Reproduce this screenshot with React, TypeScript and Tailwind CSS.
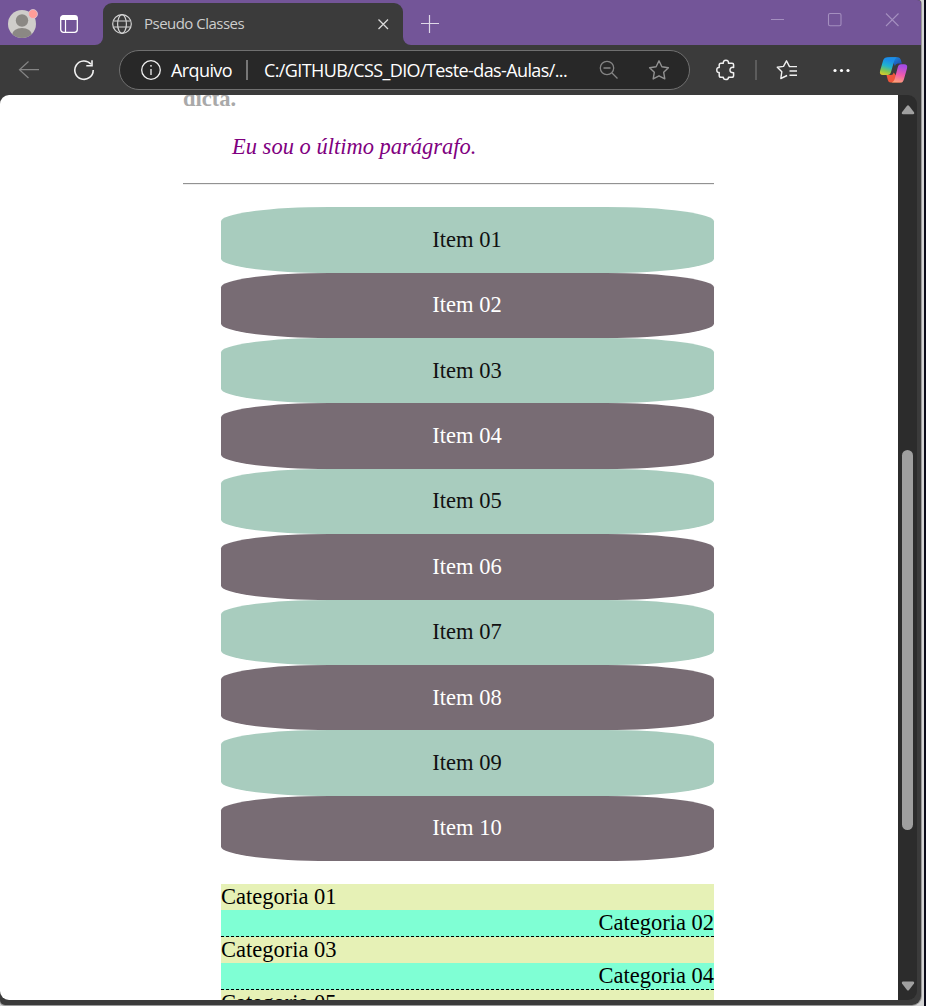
const items = ['01', '02', '03', '04', '05', '06', '07', '08', '09', '10'];
const categories = ['01', '02', '03', '04', '05'];

function TitleBar() {
  return (
    <header className="flex h-[45px] shrink-0 items-start bg-[#735598]">
      <div className="flex h-[45px] w-[103px] shrink-0 items-center bg-[#3b3b3b]">
        <div className="flex h-[45px] w-full items-center rounded-br-[8px] bg-[#735598] pt-[3px] pl-[7px]">
          <svg width="31" height="30" viewBox="0 0 31 30">
            <defs>
              <clipPath id="avatar">
                <circle cx="15" cy="15" r="14" />
              </clipPath>
            </defs>
            <circle cx="15" cy="15" r="14" fill="#cfcdca" />
            <g clipPath="url(#avatar)" fill="#8b8884">
              <circle cx="15" cy="11.5" r="6.2" />
              <ellipse cx="15" cy="26" rx="10" ry="7" />
            </g>
            <circle cx="26" cy="5" r="4.5" fill="#ff9c98" stroke="#d9c9d6" strokeWidth="0.8" />
          </svg>
          <svg className="ml-[21px]" width="20" height="20" viewBox="0 0 20 20">
            <rect x="1.7" y="1.7" width="16.6" height="16.6" rx="2.8" fill="none" stroke="#fff" strokeWidth="1.3" />
            <path d="M1.5 6V4q0-2.5 2.5-2.5h12q2.5 0 2.5 2.5v2z" fill="#fff" />
            <path d="M6.5 6v12" stroke="#fff" strokeWidth="1.2" />
          </svg>
        </div>
      </div>
      <div className="flex h-[45px] w-[300px] shrink-0 bg-[#735598] pt-[3px]">
        <div className="flex h-[42px] w-full items-center rounded-t-[9px] bg-[#3b3b3b] pr-[12px] pl-[9px]">
          <svg width="20" height="22" viewBox="0 0 20 22" fill="none" stroke="#d4d4d4" strokeWidth="1.2">
            <circle cx="10" cy="11" r="9.3" />
            <ellipse cx="10" cy="11" rx="4.4" ry="9.3" />
            <path d="M1.5 8h17M1.5 14h17" />
          </svg>
          <span className="mb-[2px] ml-[12px] w-[112px] font-['Open_Sans',sans-serif] text-[15px] leading-[20px] tracking-[-0.52px] whitespace-nowrap text-[#cdcdcd]">
            Pseudo Classes
          </span>
          <svg className="ml-auto" width="16" height="16" viewBox="0 0 16 16" stroke="#dadada" strokeWidth="1.3">
            <path d="M3.500 3.500l9.500 9.500M13 3.500l-9.500 9.500" />
          </svg>
        </div>
      </div>
      <div className="flex h-[45px] flex-1 bg-[#3b3b3b]">
        <div className="flex h-[45px] w-full rounded-bl-[8px] bg-[#735598]">
          <svg className="mt-[14px] ml-[17px]" width="20" height="20" viewBox="0 0 20 20" stroke="#dfd8e8" strokeWidth="1.2">
            <path d="M1 9.5h18M9.5 1v18" />
          </svg>
          <svg className="mt-[10px] mr-[19px] ml-auto" width="132" height="20" viewBox="0 0 132 20" fill="none" stroke="#a48fbf" strokeWidth="1.1">
            <path d="M1 9.5h13M116 3.500l12.500 12.500M128.500 3.500l-12.500 12.500" />
            <rect x="58.500" y="3.500" width="12.500" height="12.300" rx="1.500" />
          </svg>
        </div>
      </div>
    </header>
  );
}

function Toolbar() {
  return (
    <nav className="flex h-[50px] shrink-0 items-center bg-[#3b3b3b] pl-[18px]">
      <svg width="22" height="20" viewBox="0 0 22 20" fill="none" stroke="#858585" strokeWidth="1.2">
        <path d="M21 9.700H1.500M10.500 1.500l-9 8.200 9 8.300" />
      </svg>
      <svg className="ml-[33px]" width="22" height="22" viewBox="0 0 22 22" fill="none" stroke="#f1f1f1" strokeWidth="1.6">
        <path d="M18 5.200A9.200 9.200 0 1 0 20.200 11" />
        <path d="M19 1.200v5.600h-5.700" />
      </svg>
      <div className="ml-[24px] flex h-[40px] w-[571px] shrink-0 items-center rounded-full border border-[#707070] bg-[#282828] pl-[20px]">
        <svg width="22" height="22" viewBox="0 0 22 22" fill="none" stroke="#f0f0f0" strokeWidth="1.3">
          <circle cx="11" cy="11" r="9.300" />
          <path d="M11 10v6" />
          <circle cx="11" cy="6.800" r="0.900" fill="#f0f0f0" stroke="none" />
        </svg>
        <span className="mb-[1px] ml-[9px] w-[65px] shrink-0 font-['Open_Sans',sans-serif] text-[18px] leading-[24px] tracking-[-0.6px] whitespace-nowrap text-white">
          Arquivo
        </span>
        <span className="ml-[10px] h-[20px] w-[2px] shrink-0 bg-[#777]" />
        <span className="mb-[1px] ml-[16px] w-[304px] shrink-0 font-['Open_Sans',sans-serif] text-[18px] leading-[24px] tracking-[-0.61px] whitespace-nowrap text-white">
          C:/GITHUB/CSS_DIO/Teste-das-Aulas/...
        </span>
        <svg className="ml-[31px]" width="20" height="20" viewBox="0 0 20 20" fill="none" stroke="#858585" strokeWidth="1.3">
          <circle cx="8" cy="8" r="6.700" />
          <path d="M4.500 8h7M13 13l5.500 5.500" />
        </svg>
        <svg className="ml-[29px]" width="22" height="22" viewBox="0 0 22 22" fill="none" stroke="#929292" strokeWidth="1.400" strokeLinejoin="round">
          <path d="M11 1.800l2.900 6 6.500.9-4.700 4.600 1.100 6.600-5.800-3.100-5.800 3.100 1.100-6.600L1.600 8.700l6.500-.9z" />
        </svg>
      </div>
      <svg className="ml-[26px]" width="20" height="22" viewBox="0 0 20 22" fill="none" stroke="#f0f0f0" strokeWidth="1.500" strokeLinejoin="round">
        <path d="M5 4.200h2.300q-.2-3 2.600-3t2.600 3h3.500q1.600 0 1.600 1.600v2.600q-3.600-.4-3.600 2.600t3.600 2.800v2.600q0 1.800-1.700 1.800h-3.400q0 2.400-2.600 2.400t-2.600-2.400H5q-1.800 0-1.800-1.800v-2.800Q.8 13.800.8 11t2.400-2.600V6q0-1.800 1.800-1.800z" />
      </svg>
      <span className="ml-[19px] h-[20px] w-[2px] shrink-0 bg-[#5c5c5c]" />
      <svg className="ml-[19px]" width="22" height="22" viewBox="0 0 22 22" fill="none" stroke="#f0f0f0" strokeWidth="1.400" strokeLinejoin="round">
        <path d="M13.500 7.600L10.500 1.800 7.500 7.400l-6.200.9 4.500 4.500-1 6.700 6.300-3" />
        <path d="M13 7.600h8M13.500 12h7.500M13.500 16.300h7.500" />
      </svg>
      <svg className="ml-[33px]" width="20" height="6" viewBox="0 0 20 6" fill="#fff">
        <circle cx="4" cy="3.500" r="1.600" />
        <circle cx="10.500" cy="3.500" r="1.600" />
        <circle cx="17" cy="3.500" r="1.600" />
      </svg>
      <svg className="ml-[28px]" width="30" height="28" viewBox="0 0 30 28">
        <defs>
          <linearGradient id="copilotLeft" x1="0.3" y1="0" x2="0" y2="1">
            <stop offset="0.1" stopColor="#1c8ee8" />
            <stop offset="0.42" stopColor="#20b3cf" />
            <stop offset="0.7" stopColor="#80c653" />
            <stop offset="1" stopColor="#f3cd20" />
          </linearGradient>
          <linearGradient id="copilotRight" x1="0.2" y1="0" x2="0" y2="1">
            <stop offset="0" stopColor="#a54be3" />
            <stop offset="0.5" stopColor="#f05bac" />
            <stop offset="1" stopColor="#ffad70" />
          </linearGradient>
          <linearGradient id="copilotTop" x1="0" y1="0" x2="1" y2="1">
            <stop offset="0" stopColor="#16a2ed" />
            <stop offset="1" stopColor="#253da6" />
          </linearGradient>
        </defs>
        <path d="M8 1.200h11q2 0 2.800 2.500l1.100 3.800h-4q-2.300 0-3 2.500L12 2z" fill="url(#copilotTop)" />
        <path d="M22 26.500H11.500q-2 0-2.700-2.500l-1.300-5H12q2 0 2.800-2.500z" fill="#ee563b" />
        <path d="M8.500 1.200h10q-2.300.3-3.400 4.100l-3 10.400q-.9 3.300-3.600 3.300H4q-4 0-2.900-4.200l3-10.400Q5.300 1.200 8.500 1.200z" fill="url(#copilotLeft)" />
        <path d="M22 26.500h-9.500q2.300-.4 3.400-4.200l2.800-10.900q.8-3.200 3.500-3.200H25q4 0 3 4.200l-3 10.500q-1 3.600-3 3.600z" fill="url(#copilotRight)" />
      </svg>
    </nav>
  );
}

function Document() {
  return (
    <main className="h-[905px] w-[898px] overflow-hidden rounded-tl-[9px] rounded-bl-[9px] bg-white pl-[183px] font-['Liberation_Serif',serif] text-[22.5px] leading-[26px] text-black">
      <p className="mt-[-9px] h-[26px] font-bold text-[#a9a9a9]">dicta.</p>
      <p className="mt-[22px] h-[26px] pl-[49px] text-[#800080] italic">Eu sou o último parágrafo.</p>
      <hr className="mt-[23px] h-[2px] w-[531px] border-0 border-t border-b border-t-[#929292] border-b-[#eeeeee]" />
      <ul className="mt-[22.2px] ml-[38px] w-[493px]">
        {items.map((n) => (
          <li
            key={n}
            className="flex h-[65.4px] items-center justify-center rounded-[22%] pr-px odd:bg-[#a8ccbe] odd:text-[#111] even:bg-[#786c74] even:text-white"
          >
            Item {n}
          </li>
        ))}
      </ul>
      <ul className="mt-[22.8px] ml-[38px] w-[493px]">
        {categories.map((n) => (
          <li
            key={n}
            className="odd:bg-[#e6f1b6] even:border-b even:border-dashed even:border-black even:bg-[#7fffd4] even:text-right"
          >
            Categoria {n}
          </li>
        ))}
      </ul>
    </main>
  );
}

function Scrollbar() {
  return (
    <aside className="flex h-[905px] w-[19px] shrink-0 flex-col items-center rounded-tr-[9px] rounded-br-[9px] bg-[#2c2c2c]">
      <svg className="mt-[10px]" width="14" height="10" viewBox="0 0 14 10">
        <path d="M6 .8q1-1 2 0l5 6.400q.8 2-1 2H2q-1.800 0-1-2z" fill="#a0a0a0" />
      </svg>
      <div className="mt-[335px] h-[380px] w-[11px] rounded-full bg-[#9f9f9f]" />
      <svg className="mt-[151px]" width="14" height="10" viewBox="0 0 14 10">
        <path d="M2 .5h10q1.800 0 1 2L8 9q-1 1-2 0L1 2.500q-.8-2 1-2z" fill="#a0a0a0" />
      </svg>
    </aside>
  );
}

export default function App() {
  return (
    <div className="h-[1006px] w-[926px] overflow-hidden bg-[#0a0a19]">
      <div className="h-full w-[924px] bg-[#d4d4d4]">
        <div className="flex h-[1005px] w-[921px] flex-col overflow-hidden rounded-tr-[4px] rounded-br-[9px] rounded-bl-[5px] bg-[#3b3b3b] shadow-[0_0_0_1px_#999]">
          <TitleBar />
          <Toolbar />
          <div className="flex h-[905px]">
            <Document />
            <Scrollbar />
          </div>
        </div>
      </div>
    </div>
  );
}
